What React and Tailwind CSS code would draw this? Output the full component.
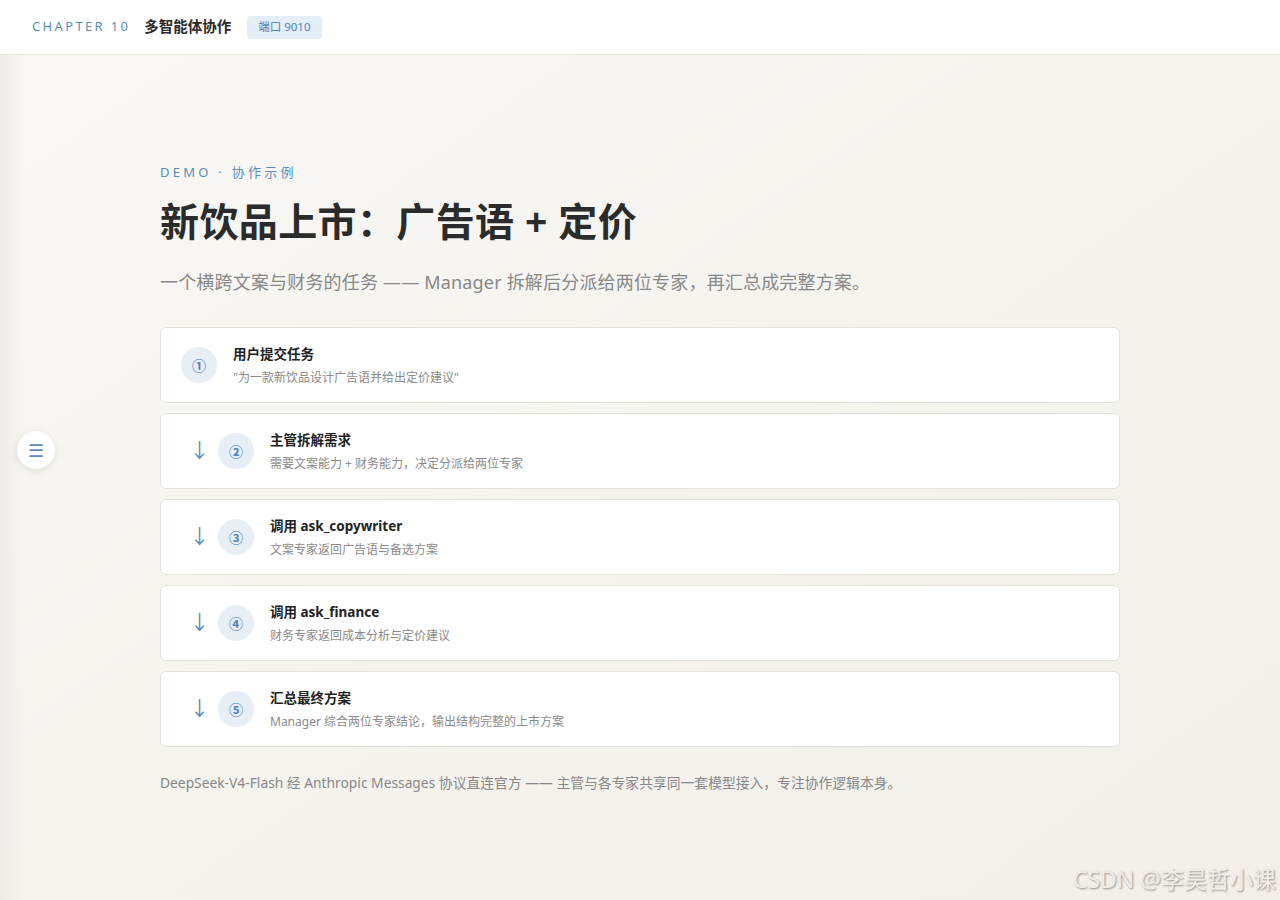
import React from 'react';

const steps = [
  { n: '①', title: '用户提交任务', desc: '"为一款新饮品设计广告语并给出定价建议"', arrow: false },
  { n: '②', title: '主管拆解需求', desc: '需要文案能力 + 财务能力，决定分派给两位专家', arrow: true },
  { n: '③', title: '调用 ask_copywriter', desc: '文案专家返回广告语与备选方案', arrow: true },
  { n: '④', title: '调用 ask_finance', desc: '财务专家返回成本分析与定价建议', arrow: true },
  { n: '⑤', title: '汇总最终方案', desc: 'Manager 综合两位专家结论，输出结构完整的上市方案', arrow: true },
];

function StepCard({ step }) {
  return (
    <div className="flex items-center h-[76px] px-5 bg-white border border-[#e6e2da] rounded-md">
      {step.arrow && (
        <span className="w-[37px] shrink-0 text-center text-[20px] leading-none text-[#5a8dbd]">↓</span>
      )}
      <div className="w-9 h-9 shrink-0 rounded-full bg-[#e7eef6] flex items-center justify-center text-[14px] font-bold text-[#4d82b8]">
        {step.n}
      </div>
      <div className="ml-4">
        <div className="text-[13.5px] font-bold text-[#222] leading-[18px]">{step.title}</div>
        <div className="mt-[7px] text-[12px] text-[#8a8a8a] leading-[16px]">{step.desc}</div>
      </div>
    </div>
  );
}

export default function App() {
  return (
    <div
      className="relative w-full min-h-[900px] bg-gradient-to-br from-[#f9f8f5] to-[#f2efe9]"
      style={{ fontFamily: '"Noto Sans", "Noto Sans CJK SC", sans-serif' }}
    >
      {/* 左侧暗边 */}
      <div className="absolute left-0 top-0 bottom-0 w-6 bg-gradient-to-r from-[#ecebe8] to-transparent pointer-events-none" />

      {/* 顶部栏 */}
      <header className="relative h-[55px] bg-white/95 border-b border-[#e8e4dc] flex items-center px-8">
        <span className="text-[13px] tracking-[0.18em] text-[#5a8dbd]">CHAPTER 10</span>
        <span className="ml-[14px] text-[14.5px] font-bold text-[#2a2a2a]">多智能体协作</span>
        <span className="ml-[16px] h-[23px] px-[11px] rounded bg-[#e4eef8] text-[11.5px] text-[#4d82b8] flex items-center">端口 9010</span>
      </header>

      {/* 悬浮菜单 */}
      <button className="absolute left-[17px] top-[431px] w-[38px] h-[38px] rounded-full bg-white shadow-[0_2px_8px_rgba(0,0,0,0.1)] flex items-center justify-center text-[18px] text-[#5a8dbd]">
        ☰
      </button>

      <main className="w-[960px] ml-[160px] pt-[107px]">
        <div className="text-[13px] tracking-[0.25em] text-[#5a8dbd] leading-5">DEMO · 协作示例</div>
        <h1 className="mt-[14px] text-[39px] font-bold text-[#2b2b2b] leading-[50px] tracking-[0.01em]">新饮品上市：广告语 + 定价</h1>
        <p className="mt-[24px] text-[18px] text-[#888] leading-6 tracking-[0.01em]">
          一个横跨文案与财务的任务 —— Manager 拆解后分派给两位专家，再汇总成完整方案。
        </p>

        <div className="mt-[33px] flex flex-col gap-[10px]">
          {steps.map((s) => (
            <StepCard key={s.n} step={s} />
          ))}
        </div>

        <p className="mt-[26px] text-[13.8px] text-[#888] leading-5">
          DeepSeek-V4-Flash 经 Anthropic Messages 协议直连官方 —— 主管与各专家共享同一套模型接入，专注协作逻辑本身。
        </p>
      </main>

      {/* 水印 */}
      <div className="absolute right-[4px] bottom-[4px] text-[23px] text-[#efede9] [text-shadow:1px_1px_2px_rgba(0,0,0,0.4)]">
        CSDN @李昊哲小课
      </div>
    </div>
  );
}
